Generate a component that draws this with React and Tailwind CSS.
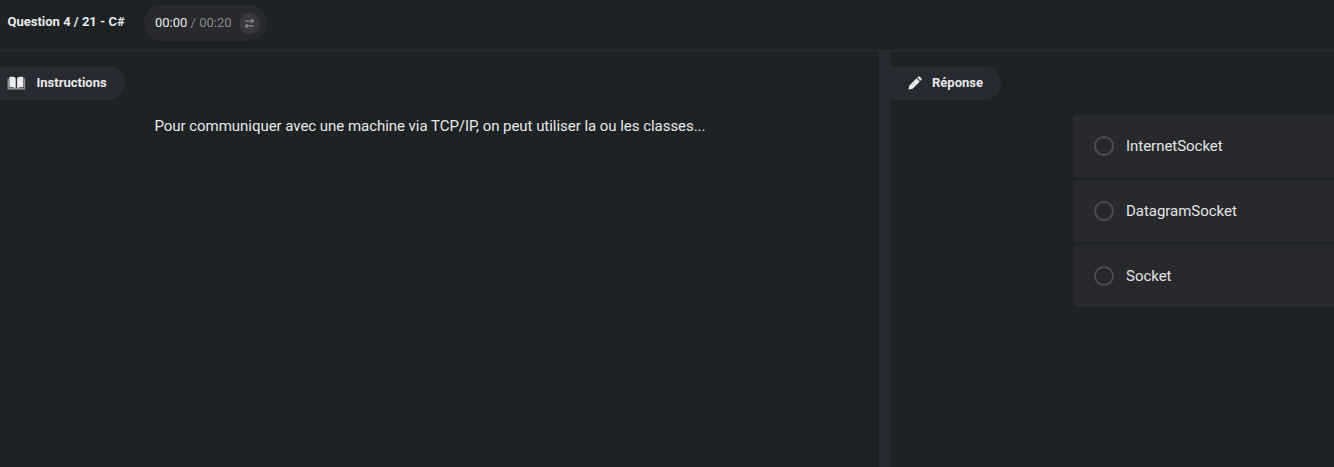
function BookIcon() {
  return (
    <svg className="h-4 w-[19px] shrink-0" viewBox="0 0 19 16">
      <path d="M.5 3.500H2v9.500h15V3.500h1.200v11H.5z" fill="#8f9396" />
      <path d="M2.400 1.900C5 1.300 7.300 1.700 8.700 3v10.300C7.200 12.300 5 12 2.400 12.400zM10.100 3c1.400-1.300 3.700-1.700 6.300-1.100v10.500c-2.400-.4-4.600-.1-6.300.9z" fill="#e9ebec" />
    </svg>
  );
}

function PencilIcon() {
  return (
    <svg className="h-[14px] w-[14px] shrink-0" viewBox="0 0 14 14" fill="#eceef2">
      <path d="M.5 13.500l.9-4L8.600 2.300l3.200 3.200-7.200 7.200zM9.300 1.600l.8-.8c.5-.5 1.200-.5 1.700 0l1.500 1.500c.5.5.5 1.200 0 1.700l-.8.800z" />
      <path d="M3 10.300l5.200-5.200" stroke="#bfc2c8" strokeWidth=".6" />
    </svg>
  );
}

function SwapIcon() {
  return (
    <svg className="h-[11px] w-[11px]" viewBox="0 0 10 10" fill="#8b8d90">
      <path d="M1 2.200h5.800V.5L9.600 2.800 6.800 5V3.400H1zM9 6.600H3.200V5L.4 7.200l2.800 2.300V7.800H9z" />
    </svg>
  );
}

function Choice({ label }) {
  return (
    <label className="flex h-[62px] items-center rounded-l-[4px] bg-[#28292d] pl-[21px]">
      <span className="h-5 w-5 rounded-full border-2 border-[#4c4e51]" />
      <span className="ml-3 text-[15px] leading-6 tracking-[-0.03px] text-[#e3e4e5]">{label}</span>
    </label>
  );
}

export default function App() {
  return (
    <div className="flex h-[467px] w-full flex-col overflow-hidden bg-[#1d2225] font-['Roboto',sans-serif] text-[#e8e9ea]">
      <header className="flex h-[51px] shrink-0 items-start border-b border-[#292d30] pt-[5px]">
        <h1 className="w-[144px] shrink-0 pl-[7.5px] text-[13px] leading-[34px] font-bold whitespace-nowrap">Question 4 / 21 - C#</h1>
        <div className="flex h-9 w-[123px] items-center rounded-full bg-[#27292d] pl-[11px] text-[13px] whitespace-nowrap">
          <span className="w-[84px] shrink-0 text-[#85878a]"><span className="text-[#e8e9ea]">00:00</span> / 00:20</span>
          <span className="flex h-[21px] w-[21px] items-center justify-center rounded-full bg-[#36383b]">
            <SwapIcon />
          </span>
        </div>
      </header>
      <main className="flex min-h-0 flex-1">
        <section className="w-[879px] pt-[15px]">
          <div className="flex h-[34px] w-[125px] items-center rounded-r-full bg-[#272a30] pl-[7px]">
            <BookIcon />
            <h2 className="ml-[10.5px] text-[13px] leading-5 font-bold">Instructions</h2>
          </div>
          <p className="mt-[14px] ml-[154.5px] text-[15px] leading-6 tracking-[-0.04px] whitespace-nowrap">Pour communiquer avec une machine via TCP/IP, on peut utiliser la ou les classes...</p>
        </section>
        <div className="w-[11px] shrink-0 bg-[#282b33]" />
        <section className="min-w-0 flex-1 pt-[15px]">
          <div className="flex h-[34px] w-[111px] items-center rounded-r-full bg-[#272a30] pl-[18px]">
            <PencilIcon />
            <h2 className="ml-[10px] text-[13px] leading-5 font-bold">Réponse</h2>
          </div>
          <div className="mt-[15px] ml-[183px] flex flex-col gap-[3px]">
            <Choice label="InternetSocket" />
            <Choice label="DatagramSocket" />
            <Choice label="Socket" />
          </div>
        </section>
      </main>
    </div>
  );
}
